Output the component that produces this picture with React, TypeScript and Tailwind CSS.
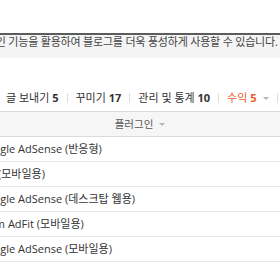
import React from 'react'

const tabs = [
  { label: '글 보내기', count: 5 },
  { label: '꾸미기', count: 17 },
  { label: '관리 및 통계', count: 10 },
  { label: '수익', count: 5, active: true },
]

const plugins = [
  { name: 'Google AdSense (반응형)', pad: 'pl-0' },
  { name: '(모바일용)', pad: 'pl-[19px]' },
  { name: 'Google AdSense (데스크탑 웹용)', pad: 'pl-0' },
  { name: 'Daum AdFit (모바일용)', pad: '-ml-[5px]' },
  { name: 'Google AdSense (모바일용)', pad: 'pl-0' },
]

function Caret() {
  return <span className="ml-[6px] inline-block h-0 w-0 border-x-[3px] border-t-[3px] border-x-transparent border-t-[#b5b5b5]" />
}

export default function App() {
  return (
    <div className="h-[280px] w-[280px] overflow-hidden bg-white font-['Open_Sans','Noto_Sans_CJK_KR',sans-serif]">
      <div className="h-[33px]" />

      {/* intro */}
      <div className="h-[25px] border-t-2 border-[#5c5c5c] bg-[#f4f4f4]">
        <p className="-ml-[34px] whitespace-nowrap text-[11px] leading-[14px] tracking-[-0.2px] text-[#444]">
          플러그인 기능을 활용하여 블로그를 더욱 풍성하게 사용할 수 있습니다.
        </p>
      </div>

      {/* category tabs */}
      <div className="flex h-[53px] items-end pb-[6px] pl-[6px]">
        {tabs.map((t) => (
          <div key={t.label} className="flex items-center">
            <span
              className={
                'whitespace-nowrap text-[11px] leading-[14px] ' +
                (t.active ? 'text-[#ec5a2b]' : 'text-[#333]')
              }
            >
              {t.label} <b className="font-bold">{t.count}</b>
            </span>
            {t.active && <Caret />}
            <span className="mx-[8px] h-[10px] w-px bg-[#dedede]" />
          </div>
        ))}
      </div>

      {/* filter bar */}
      <div className="flex h-[26px] items-center justify-center border-y border-[#dcdcdc] bg-[#f6f6f6]">
        <span className="text-[10.5px] leading-[14px] text-[#555]">플러그인</span>
        <Caret />
      </div>

      {/* plugin list */}
      <ul className="-ml-[21px]">
        {plugins.map((p, i) => (
          <li
            key={i}
            className={'flex h-[25px] items-center border-b border-[#e6e6e6] whitespace-nowrap text-[11px] text-[#333] ' + p.pad}
          >
            {p.name}
          </li>
        ))}
      </ul>
    </div>
  )
}
